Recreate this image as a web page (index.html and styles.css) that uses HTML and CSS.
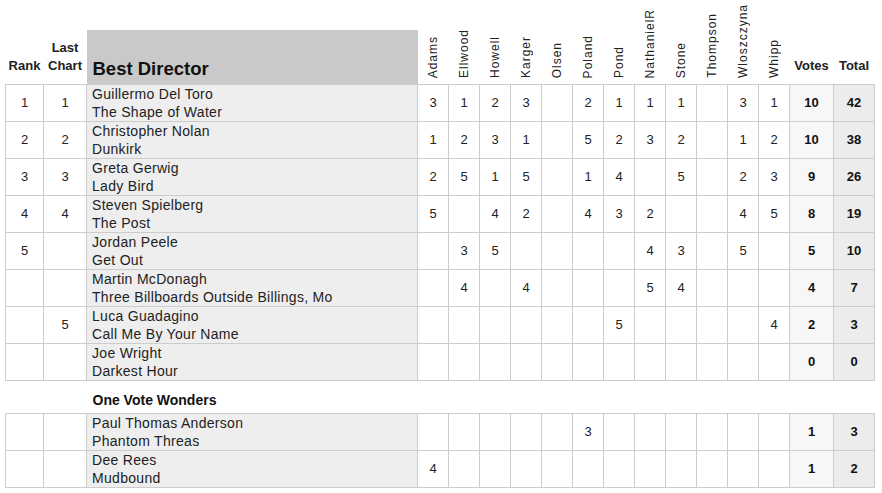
FILE: index.html
```html
<!DOCTYPE html>
<html>
<head>
<meta charset="utf-8">
<link rel="stylesheet" href="styles.css">
</head>
<body>
<table class="chart">
  <colgroup>
    <col class="c-rank"><col class="c-last"><col class="c-name">
    <col class="c-v"><col class="c-v"><col class="c-v"><col class="c-v"><col class="c-v"><col class="c-v">
    <col class="c-v"><col class="c-v"><col class="c-v"><col class="c-v"><col class="c-v"><col class="c-v">
    <col class="c-votes"><col class="c-total">
  </colgroup>
  <thead>
    <tr>
      <th class="h-small">Rank</th>
      <th class="h-small">Last<br>Chart</th>
      <th class="h-title"><div class="title-box">Best Director</div></th>
      <th class="h-rot"><span>Adams</span></th>
      <th class="h-rot"><span>Ellwood</span></th>
      <th class="h-rot"><span>Howell</span></th>
      <th class="h-rot"><span>Karger</span></th>
      <th class="h-rot"><span>Olsen</span></th>
      <th class="h-rot"><span>Poland</span></th>
      <th class="h-rot"><span>Pond</span></th>
      <th class="h-rot"><span>NathanielR</span></th>
      <th class="h-rot"><span>Stone</span></th>
      <th class="h-rot"><span>Thompson</span></th>
      <th class="h-rot"><span>Wloszczyna</span></th>
      <th class="h-rot"><span>Whipp</span></th>
      <th class="h-small">Votes</th>
      <th class="h-small">Total</th>
    </tr>
  </thead>
  <tbody>
    <tr><td>1</td><td>1</td><td class="name">Guillermo Del Toro<br>The Shape of Water</td><td>3</td><td>1</td><td>2</td><td>3</td><td></td><td>2</td><td>1</td><td>1</td><td>1</td><td></td><td>3</td><td>1</td><td class="votes">10</td><td class="total">42</td></tr>
    <tr><td>2</td><td>2</td><td class="name">Christopher Nolan<br>Dunkirk</td><td>1</td><td>2</td><td>3</td><td>1</td><td></td><td>5</td><td>2</td><td>3</td><td>2</td><td></td><td>1</td><td>2</td><td class="votes">10</td><td class="total">38</td></tr>
    <tr><td>3</td><td>3</td><td class="name">Greta Gerwig<br>Lady Bird</td><td>2</td><td>5</td><td>1</td><td>5</td><td></td><td>1</td><td>4</td><td></td><td>5</td><td></td><td>2</td><td>3</td><td class="votes">9</td><td class="total">26</td></tr>
    <tr><td>4</td><td>4</td><td class="name">Steven Spielberg<br>The Post</td><td>5</td><td></td><td>4</td><td>2</td><td></td><td>4</td><td>3</td><td>2</td><td></td><td></td><td>4</td><td>5</td><td class="votes">8</td><td class="total">19</td></tr>
    <tr><td>5</td><td></td><td class="name">Jordan Peele<br>Get Out</td><td></td><td>3</td><td>5</td><td></td><td></td><td></td><td></td><td>4</td><td>3</td><td></td><td>5</td><td></td><td class="votes">5</td><td class="total">10</td></tr>
    <tr><td></td><td></td><td class="name">Martin McDonagh<br>Three Billboards Outside Billings, Mo</td><td></td><td>4</td><td></td><td>4</td><td></td><td></td><td></td><td>5</td><td>4</td><td></td><td></td><td></td><td class="votes">4</td><td class="total">7</td></tr>
    <tr><td></td><td>5</td><td class="name">Luca Guadagino<br>Call Me By Your Name</td><td></td><td></td><td></td><td></td><td></td><td></td><td>5</td><td></td><td></td><td></td><td></td><td>4</td><td class="votes">2</td><td class="total">3</td></tr>
    <tr><td></td><td></td><td class="name">Joe Wright<br>Darkest Hour</td><td></td><td></td><td></td><td></td><td></td><td></td><td></td><td></td><td></td><td></td><td></td><td></td><td class="votes">0</td><td class="total">0</td></tr>
    <tr class="section"><td></td><td></td><td class="section-title">One Vote Wonders</td><td colspan="14"></td></tr>
    <tr><td></td><td></td><td class="name">Paul Thomas Anderson<br>Phantom Threas</td><td></td><td></td><td></td><td></td><td></td><td>3</td><td></td><td></td><td></td><td></td><td></td><td></td><td class="votes">1</td><td class="total">3</td></tr>
    <tr><td></td><td></td><td class="name">Dee Rees<br>Mudbound</td><td>4</td><td></td><td></td><td></td><td></td><td></td><td></td><td></td><td></td><td></td><td></td><td></td><td class="votes">1</td><td class="total">2</td></tr>
  </tbody>
</table>
</body>
</html>
```
FILE: styles.css
```css
html, body {
  margin: 0;
  padding: 0;
  background: #fff;
}
body {
  padding: 1px 0 0 5px;
  font-family: "Liberation Sans", Arial, sans-serif;
  color: #222;
}
.chart {
  border-collapse: collapse;
  table-layout: fixed;
  width: 869px;
}
.c-rank { width: 38px; }
.c-last { width: 43px; }
.c-name { width: 331px; }
.c-v { width: 31px; }
.c-votes { width: 44px; }
.c-total { width: 41px; }

thead th {
  padding: 0;
  vertical-align: bottom;
  border: none;
}
.h-small {
  font-size: 13px;
  font-weight: bold;
  line-height: 18px;
  padding-bottom: 9px;
  text-align: center;
  color: #222;
}
.h-title {
  text-align: left;
}
.title-box {
  height: 54px;
  background: #c9c9c9;
  font-size: 18.5px;
  font-weight: bold;
  color: #111;
  box-sizing: border-box;
  padding: 0 0 4px 6px;
  display: flex;
  align-items: flex-end;
}
.h-rot {
  height: 81px;
  text-align: center;
  padding-bottom: 2px;
}
.h-rot span {
  display: inline-block;
  writing-mode: vertical-rl;
  transform: rotate(180deg);
  font-size: 12px;
  font-weight: normal;
  letter-spacing: 1px;
  line-height: 14px;
  color: #222;
}
tbody td {
  border: 1px solid #ccc;
  height: 36px;
  padding: 0;
  font-size: 13px;
  line-height: 18px;
  text-align: center;
  vertical-align: middle;
}
tbody td.name {
  text-align: left;
  padding-left: 5px;
  background: #eee;
  font-size: 14px;
  letter-spacing: 0.3px;
  color: #222;
}
tbody td.votes {
  background: #f7f7f7;
  font-weight: bold;
  color: #111;
}
tbody td.total {
  background: #ececec;
  font-weight: bold;
  color: #111;
}
tbody tr.section td {
  border: none;
  height: 27px;
  background: #fff;
}
tbody tr.section td.section-title {
  text-align: left;
  padding-left: 6px;
  font-size: 14px;
  font-weight: bold;
  color: #111;
  vertical-align: middle;
  padding-top: 5px;
}
```
